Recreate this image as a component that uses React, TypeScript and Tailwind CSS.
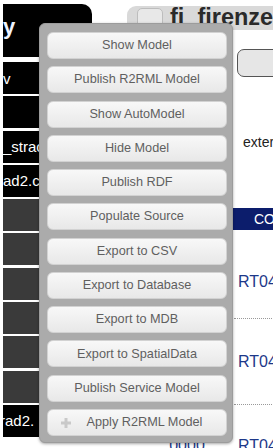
import React from "react";

const menuItems = [
  "Show Model",
  "Publish R2RML Model",
  "Show AutoModel",
  "Hide Model",
  "Publish RDF",
  "Populate Source",
  "Export to CSV",
  "Export to Database",
  "Export to MDB",
  "Export to SpatialData",
  "Publish Service Model",
];

const sideRows: { text: string; dark?: boolean; shift?: string }[] = [
  { text: "v" },
  { text: "" },
  { text: "_strac" },
  { text: "ad2.c" },
  { text: "", dark: true },
  { text: "", dark: true },
  { text: "", dark: true },
  { text: "", dark: true },
  { text: "", dark: true },
  { text: "", dark: true },
  { text: "rad2.", shift: "-ml-[3px]" },
];

export default function App() {
  return (
    <div className="relative flex h-[448px] w-[273px] overflow-hidden bg-white font-['Liberation_Sans',Arial,sans-serif]">
      {/* Left file list */}
      <div className="flex w-[127px] shrink-0 flex-col pl-[3px] pt-[4px]">
        <div className="h-[53px] w-[89px] rounded-tr-[10px] bg-black pt-[12px] text-[22px] font-bold leading-none text-[#eef3ff]">
          y
        </div>
        <div className="mt-[5px] flex flex-col gap-[2.3px]">
          {sideRows.map((row, i) => (
            <div
              key={i}
              className={`flex h-[32px] w-[120px] items-center overflow-hidden text-[15px] leading-none text-white ${
                row.dark ? "bg-[#3a3a3a]" : "bg-black"
              }`}
            >
              <span className={`whitespace-nowrap ${row.shift ?? ""}`}>{row.text}</span>
            </div>
          ))}
        </div>
      </div>

      {/* Main area */}
      <div className="flex min-w-0 flex-1 flex-col pt-[6px]">
        <div className="flex h-[27px] w-[160px] items-center rounded-tl-[9px] bg-[#d9d9d9] pl-[10px]">
          <div className="h-[20px] w-[26px] shrink-0 rounded-[5px] border border-[#bdbdbd] bg-[#e8e8e8]" />
          <span className="ml-[7px] whitespace-nowrap text-[23.5px] font-bold leading-none text-[#2a2a2a]">
            fi_firenze
          </span>
        </div>

        <div className="ml-[110px] mt-[19px] h-[28px] w-[60px] shrink-0 rounded-[7px] border border-[#555] bg-[#e6e6e6]" />

        <div className="ml-[116px] mt-[58px] whitespace-nowrap text-[14px] leading-none text-[#222]">
          external
        </div>

        {/* Table */}
        <div className="ml-[13px] mt-[59px] w-[200px] shrink-0">
          <div className="flex h-[22px] items-center bg-[#0c1d6c] text-[14px] leading-none text-white">
            <div className="w-[94px] shrink-0" />
            <div className="whitespace-nowrap pl-[20px]">CODICE</div>
          </div>
          <div className="flex h-[89px]">
            <div className="w-[94px] shrink-0" />
            <div className="flex-1 border-b border-dotted border-[#999] pl-[4px] pt-[44px] text-[16px] leading-none text-[#1d3889]">
              RT04
            </div>
          </div>
          <div className="flex h-[86px]">
            <div className="w-[94px] shrink-0" />
            <div className="flex-1 border-b border-dotted border-[#999] pl-[4px] pt-[35px] text-[16px] leading-none text-[#1d3889]">
              RT04
            </div>
          </div>
          <div className="flex h-[60px] text-[16px] leading-none text-[#1d3889]">
            <div className="w-[94px] shrink-0 pt-[33px] text-center">0000</div>
            <div className="flex-1 pl-[4px] pt-[33px]">RT04</div>
          </div>
        </div>
      </div>

      {/* Context menu */}
      <div className="absolute left-[39px] top-[23px] flex h-[420px] w-[194px] flex-col gap-[7.27px] rounded-[6px] border border-[#9c9c9c] bg-[#ababab] pl-[7px] pr-[5px] pt-[8px] shadow-[0_1px_3px_rgba(0,0,0,0.35)]">
        {menuItems.map((label) => (
          <div
            key={label}
            className="flex h-[27px] w-[180px] shrink-0 items-center justify-center rounded-[6px] border border-[#d2d2d2] bg-gradient-to-b from-[#f8f8f8] to-[#e8e8e8] text-[12.7px] leading-none text-[#5f5f5f]"
          >
            {label}
          </div>
        ))}
        <div className="relative flex h-[27px] w-[180px] shrink-0 items-center justify-center rounded-[6px] border border-[#d2d2d2] bg-gradient-to-b from-[#f8f8f8] to-[#e8e8e8] pl-[15px] text-[12.7px] leading-none text-[#5f5f5f]">
          <svg
            className="absolute left-[12px] top-[7px]"
            width="12"
            height="12"
            viewBox="0 0 12 12"
          >
            <path d="M6 1v10M1 6h10" stroke="#c9c9c9" strokeWidth="3" />
          </svg>
          Apply R2RML Model
        </div>
      </div>
    </div>
  );
}
